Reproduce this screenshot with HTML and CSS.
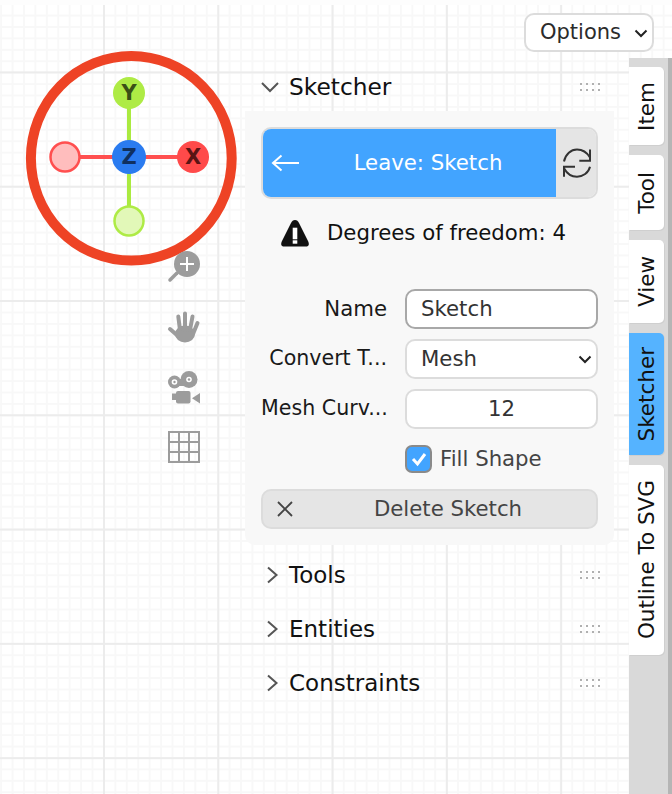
FILE: index.html
```html
<!DOCTYPE html>
<html lang="en">
<head>
    <meta charset="UTF-8">
    <meta name="viewport" content="width=device-width, initial-scale=1.0">
    <title>Sketcher</title>
    <link rel="stylesheet" href="styles.css">
</head>
<body>
    <div class="viewport">
        <!-- navigation gizmo, floats over the 3d view -->
        <svg class="gizmo" width="250" height="280" viewBox="0 0 250 280">
            <ellipse cx="131.300" cy="158.300" rx="100.400" ry="102.300" fill="none" stroke="#ee4325" stroke-width="10"/>
            <path d="M129 98V220" stroke="#aaea40" stroke-width="4"/>
            <path d="M65 157H194" stroke="#ff4f4f" stroke-width="4"/>
            <circle cx="129" cy="93" r="16" fill="#aeeb45"/>
            <circle cx="129" cy="221" r="14.500" fill="#e2f8b8" stroke="#aeeb45" stroke-width="2.500"/>
            <circle cx="65" cy="157" r="14.500" fill="#ffbdbd" stroke="#ff4f4f" stroke-width="2.500"/>
            <circle cx="193" cy="157" r="16" fill="#ff4a4a"/>
            <circle cx="129" cy="157" r="17" fill="#2a7bf0"/>
            <text class="gizmo-label label-y" x="129" y="100">Y</text>
            <text class="gizmo-label label-x" x="193" y="164">X</text>
            <text class="gizmo-label label-z" x="129" y="164">Z</text>
        </svg>

        <div class="nav-tools">
            <svg width="34" height="34" viewBox="0 0 34 34">
                <circle cx="20" cy="14" r="13" fill="#9c9c9c"/>
                <path d="M13 14H27M20 7V21" stroke="#fff" stroke-width="2"/>
                <path d="M10 23L3 30" stroke="#9c9c9c" stroke-width="3.500" stroke-linecap="round"/>
            </svg>
            <svg width="34" height="34" viewBox="0 0 34 34">
                <ellipse cx="18" cy="24" rx="10" ry="8.500" fill="#9c9c9c"/>
                <path d="M3 19L11 26M11.300 6.500L13 20M18 3.500V20M25.500 6.500L23 20M30.500 13L26 24" fill="none" stroke="#9c9c9c" stroke-width="4" stroke-linecap="round"/>
            </svg>
            <svg width="34" height="34" viewBox="0 0 34 34">
                <circle cx="7.500" cy="12" r="6.500" fill="#9c9c9c"/>
                <circle cx="22" cy="9.500" r="8.500" fill="#9c9c9c"/>
                <path d="M10 9H20V16H10z" fill="#9c9c9c"/>
                <circle cx="7.500" cy="12" r="2.800" fill="#fff"/>
                <circle cx="22" cy="9.500" r="2.800" fill="#fff"/>
                <circle cx="7.500" cy="12" r="1.200" fill="#9c9c9c"/>
                <circle cx="22" cy="9.500" r="1.200" fill="#9c9c9c"/>
                <rect x="9" y="21" width="14.500" height="12.500" rx="2" fill="#9c9c9c"/>
                <rect x="5" y="23.500" width="4" height="6.500" fill="#9c9c9c"/>
                <path d="M33 23V33.500L25 28.300z" fill="#9c9c9c"/>
            </svg>
            <svg width="34" height="34" viewBox="0 0 34 34">
                <path d="M2 2H32V32H2zM12 2V32M22 2V32M2 12H32M2 22H32" fill="none" stroke="#9c9c9c" stroke-width="2"/>
            </svg>
        </div>

        <div class="top-strip"></div>
        <div class="top-bar">
            <div class="dropdown options">Options
                <svg class="caret" width="14" height="9" viewBox="0 0 14 9"><path d="M1.500 1.500L7 7 12.500 1.500" fill="none" stroke="#222" stroke-width="2"/></svg>
            </div>
        </div>

        <div class="sidebar">
            <div class="panels">
                <div class="panel-head first">
                    <svg class="arrow" width="22" height="18" viewBox="0 0 22 18"><path d="M3 5L11 13 19 5" fill="none" stroke="#555" stroke-width="2"/></svg>
                    <span>Sketcher</span>
                    <span class="grip"></span>
                </div>
                <div class="panel-body">
                    <div class="leave-row">
                        <div class="leave-btn">
                            <svg class="leave-arrow" width="28" height="20" viewBox="0 0 28 20"><path d="M10.500 2.500L2 10 10.500 17.500M2 10H28" fill="none" stroke="#fff" stroke-width="2"/></svg>
                            <span>Leave: Sketch</span>
                        </div>
                        <div class="swap-btn">
                            <svg width="30" height="30" viewBox="0 0 30 30"><path d="M2 13.500C3.500 6 9 1.500 15 1.500c5 0 10 3 13 8M28 1.500V12.700H17.300M28 18.700C26.500 25 21 28.700 15 28.700c-5 0-10-3-13-8.500M2 28.700V18.700H13" fill="none" stroke="#333" stroke-width="2"/></svg>
                        </div>
                    </div>
                    <div class="warning">
                        <svg width="28" height="28" viewBox="0 0 28 28"><path d="M14 1c2 0 3 1 4 3L27 22c1.500 3 1 5.500-2 5.500H3C0 27.500-.5 25 1 22L10 4c1-2 2-3 4-3z" fill="#111"/><rect x="11.700" y="8.700" width="4.600" height="11.600" fill="#fff"/><rect x="11.700" y="21.300" width="4.600" height="3.400" fill="#fff"/></svg>
                        <span>Degrees of freedom: 4</span>
                    </div>
                    <div class="form-row name-row">
                        <label>Name</label>
                        <div class="field text-field">Sketch</div>
                    </div>
                    <div class="form-row">
                        <label>Convert T...</label>
                        <div class="field dropdown-field">Mesh
                            <svg class="caret" width="14" height="9" viewBox="0 0 14 9"><path d="M1.500 1.500L7 7 12.500 1.500" fill="none" stroke="#222" stroke-width="2"/></svg>
                        </div>
                    </div>
                    <div class="form-row">
                        <label>Mesh Curv...</label>
                        <div class="field number-field">12</div>
                    </div>
                    <div class="form-row check-row">
                        <label></label>
                        <div class="check-wrap">
                            <span class="checkbox">
                                <svg width="20" height="20" viewBox="0 0 20 20"><path d="M4 10L8.500 15 16 5" fill="none" stroke="#fff" stroke-width="3"/></svg>
                            </span>
                            <span class="check-label">Fill Shape</span>
                        </div>
                    </div>
                    <div class="delete-btn">
                        <svg width="18" height="18" viewBox="0 0 18 18"><path d="M2 2L16 16M16 2L2 16" fill="none" stroke="#444" stroke-width="1.800"/></svg>
                        <span>Delete Sketch</span>
                    </div>
                </div>
                <div class="panel-head">
                    <svg class="arrow" width="22" height="18" viewBox="0 0 22 18"><path d="M9 1.500L17.500 9 9 16.500" fill="none" stroke="#555" stroke-width="2"/></svg>
                    <span class="panel-title">Tools</span>
                    <span class="grip"></span>
                </div>
                <div class="panel-head">
                    <svg class="arrow" width="22" height="18" viewBox="0 0 22 18"><path d="M9 1.500L17.500 9 9 16.500" fill="none" stroke="#555" stroke-width="2"/></svg>
                    <span class="panel-title">Entities</span>
                    <span class="grip"></span>
                </div>
                <div class="panel-head">
                    <svg class="arrow" width="22" height="18" viewBox="0 0 22 18"><path d="M9 1.500L17.500 9 9 16.500" fill="none" stroke="#555" stroke-width="2"/></svg>
                    <span class="panel-title">Constraints</span>
                    <span class="grip"></span>
                </div>
            </div>
            <div class="tabs">
                <div class="tab tab-item"><span>Item</span></div>
                <div class="tab tab-tool"><span>Tool</span></div>
                <div class="tab tab-view"><span>View</span></div>
                <div class="tab tab-sketcher"><span>Sketcher</span></div>
                <div class="tab tab-outline"><span>Outline To SVG</span></div>
            </div>
        </div>
    </div>
</body>
</html>
```

FILE: styles.css
```css
html, body {
    margin: 0;
    padding: 0;
}

body {
    font-family: "DejaVu Sans", sans-serif;
    color: #111;
}

.viewport {
    position: relative;
    width: 672px;
    height: 794px;
    overflow: hidden;
    box-sizing: border-box;
    background-color: #fff;
    background-image:
        linear-gradient(#ececec 2px, transparent 2px),
        linear-gradient(90deg, #ececec 2px, transparent 2px),
        linear-gradient(#f8f8f8 2px, transparent 2px),
        linear-gradient(90deg, #f8f8f8 2px, transparent 2px);
    background-size: 114.3px 114.3px, 114.3px 114.3px, 11.43px 11.43px, 11.43px 11.43px;
    background-position: 0 71.4px, 103px 0, 0 3.2px, 0.2px 0;
}

.gizmo {
    position: absolute;
    left: 0;
    top: 0;
}

.gizmo-label {
    font-size: 21px;
    font-weight: bold;
    text-anchor: middle;
}

.label-y { fill: #3a4f16; }
.label-x { fill: #5a1414; }
.label-z { fill: #10305f; }

.nav-tools {
    position: absolute;
    left: 167px;
    top: 250px;
    display: flex;
    flex-direction: column;
    gap: 26px;
}

.nav-tools svg {
    display: block;
}

.top-strip {
    height: 5px;
    background: #fdfdfd;
}

.top-bar {
    display: flex;
    justify-content: flex-end;
    height: 53px;
    padding: 8px 18px 0 0;
    box-sizing: border-box;
}

.dropdown {
    display: flex;
    align-items: center;
    box-sizing: border-box;
    background: #fff;
    border: 2px solid #dcdcdc;
    border-radius: 10px;
}

.options {
    width: 130px;
    height: 39px;
    padding: 0 4px 2px 14px;
    font-size: 21px;
    color: #2b2b2b;
    justify-content: space-between;
}

.caret {
    margin-top: 3px;
}

.sidebar {
    display: flex;
    height: 736px;
}

.panels {
    width: 629px;
    padding-left: 245px;
    box-sizing: border-box;
}

.panel-head {
    display: flex;
    align-items: center;
    height: 54px;
    font-size: 23.3px;
    padding-right: 27px;
    margin-left: 14px;
}

.panel-head.first {
    height: 53px;
    margin-top: 2px;
}

.panel-title {
    font-size: 23px;
}

.arrow {
    margin-right: 8px;
    flex-shrink: 0;
}

/* 4 x 2 dots, one dot plus shadows */
.grip {
    width: 2px;
    height: 2px;
    margin: 0 20px 6px auto;
    background: #b0b0b0;
    box-shadow: 6px 0 #b0b0b0, 12px 0 #b0b0b0, 18px 0 #b0b0b0,
        0 6px #b0b0b0, 6px 6px #b0b0b0, 12px 6px #b0b0b0, 18px 6px #b0b0b0;
}

.panel-body {
    width: 369px;
    height: 434px;
    padding: 16px 16px 0 16px;
    box-sizing: border-box;
    background: #f8f8f8;
    border-radius: 0 0 10px 10px;
    margin-top: -2px;
    margin-bottom: 3px;
}

.leave-row {
    display: flex;
    height: 72px;
    box-sizing: border-box;
    border: 2px solid #dcdcdc;
    border-radius: 10px;
    overflow: hidden;
}

.leave-btn {
    position: relative;
    flex: 1;
    display: flex;
    align-items: center;
    justify-content: center;
    padding: 0 0 2px 37px;
    background: #42a4ff;
    color: #fff;
    font-size: 21.25px;
}

.leave-arrow {
    position: absolute;
    left: 8px;
    top: 24px;
}

.swap-btn {
    width: 40px;
    display: flex;
    align-items: center;
    justify-content: center;
    background: #e5e5e5;
}

.swap-btn svg {
    margin-left: 2px;
}

.warning {
    display: flex;
    align-items: center;
    gap: 18px;
    height: 66px;
    padding-left: 20px;
    font-size: 21.25px;
}

.warning svg {
    margin-top: 2px;
    overflow: visible;
}

.form-row {
    display: flex;
    align-items: center;
    height: 40px;
    margin-bottom: 10px;
    font-size: 21.25px;
}

.name-row {
    margin-top: 24px;
}

.form-row label {
    width: 126px;
    margin-right: 18px;
    padding-bottom: 2px;
    text-align: right;
    white-space: nowrap;
    font-size: 20.6px;
    color: #1a1a1a;
}

.form-row.name-row label {
    font-size: 21.25px;
}

.field {
    display: flex;
    align-items: center;
    flex: 1;
    height: 40px;
    box-sizing: border-box;
    background: #fff;
    border: 2px solid #dcdcdc;
    border-radius: 10px;
    padding: 0 4px 2px 14px;
    color: #333;
}

.text-field {
    border-color: #a8a8a8;
}

.dropdown-field {
    justify-content: space-between;
}

.number-field {
    justify-content: center;
    padding: 0 0 2px;
}

.check-wrap {
    display: flex;
    align-items: center;
    gap: 8px;
    color: #444;
}

.check-label {
    padding-bottom: 2px;
}

.checkbox {
    display: flex;
    align-items: center;
    justify-content: center;
    width: 27px;
    height: 28px;
    box-sizing: border-box;
    background: #42a4ff;
    border: 2px solid #8a8a8a;
    border-radius: 7px;
}

.delete-btn {
    position: relative;
    display: flex;
    align-items: center;
    justify-content: center;
    height: 40px;
    padding: 0 0 2px 37px;
    box-sizing: border-box;
    background: #e5e5e5;
    border: 2px solid #dcdcdc;
    border-radius: 10px;
    font-size: 21.25px;
    color: #444;
}

.delete-btn svg {
    position: absolute;
    left: 13px;
    top: 9px;
}

.tabs {
    flex: 1;
    display: flex;
    flex-direction: column;
    background: #d9d9d9;
    border-right: 4px solid #b5b5b5;
    padding-top: 9px;
    gap: 10px;
}

.tab {
    display: flex;
    align-items: center;
    justify-content: center;
    width: 35px;
    background: #fff;
    border-radius: 0 5px 5px 0;
    box-shadow: 1px 1px 0 #cfcfcf;
    font-size: 21.5px;
}

.tab span {
    writing-mode: vertical-rl;
    transform: rotate(180deg);
    white-space: nowrap;
}

.tab-item { height: 78px; }
.tab-tool { height: 75px; }
.tab-view { height: 83px; }
.tab-sketcher {
    height: 122px;
    background: #55b3ff;
}
.tab-outline { height: 190px; }
```
